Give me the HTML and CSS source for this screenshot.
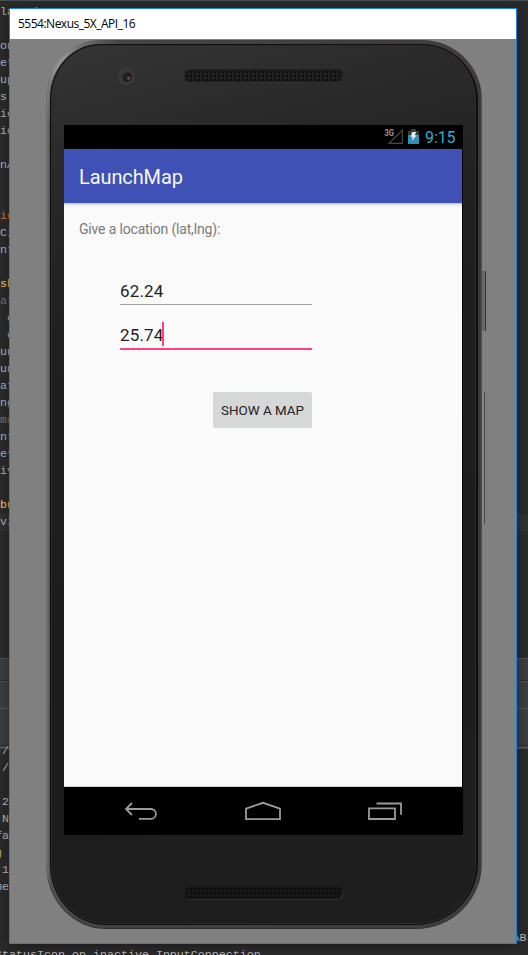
FILE: index.html
```html
<!DOCTYPE html>
<html lang="en">
<head>
<meta charset="utf-8">
<title>5554:Nexus_5X_API_16</title>
<link rel="stylesheet" href="styles.css">
</head>
<body>
<div class="desktop">
  <main class="ide">
    <pre class="editor">la   h

on
et
up
s
ie
id

nA


<span class="kw">id</span>
Ci
nt

<span class="fn">sh</span>
<span class="dim">at</span>
 e
 e
un
un
at
ng
<span class="dim">ma</span>
nt
et
iv

<span class="fn">bu</span>
<span class="current">vi</span></pre>
    <div class="tabs"></div>
    <div class="toolhead"></div>
    <div class="toolbar"></div>
    <div class="splitter"></div>
    <pre class="console">-/
./

 2
 N
fa
<span class="log">g</span>
 1
me


                                                                          AB
StatusIcon on inactive InputConnection</pre>
  </main>

  <section class="window">
    <header class="titlebar">5554:Nexus_5X_API_16</header>
    <div class="stage">
      <div class="phone">
        <i class="power"></i>
        <i class="volume"></i>
        <div class="rim">
          <div class="face">
            <div class="bezel-top">
              <span class="camera"><i class="lens"></i></span>
              <span class="speaker"></span>
            </div>
            <div class="screen">
              <div class="status">
                <svg width="20" height="18" viewBox="0 0 20 18"><path d="M18.3 2.2v13.2H5z" fill="none" stroke="#484848" stroke-width="1.2"/><text class="net" x="0.5" y="7.6" textLength="9.5" lengthAdjust="spacingAndGlyphs">3G</text></svg>
                <svg class="battery" width="11" height="16" viewBox="0 0 11 16"><path d="M3 0h5v2h3v4H0V2h3z" fill="#3c3c3c"/><path d="M0 6h11v9H0z" fill="#2f8fb8"/><path d="M4.2 3h4L6.7 6.2h2L3.8 12l.9-4.2H2.8z" fill="#eee"/></svg>
                <span class="clock">9:15</span>
              </div>
              <div class="appbar">LaunchMap</div>
              <div class="content">
                <p class="prompt">Give a location (lat,lng):</p>
                <form class="form">
                  <div class="field">62.24</div>
                  <div class="field focus">25.74<i class="caret"></i></div>
                  <div class="button">SHOW A MAP</div>
                </form>
              </div>
              <nav class="nav">
                <svg width="34" height="20" viewBox="0 0 34 20"><path d="M9 2L3 8l6 6M3 8H28a4.9 4.9 0 0 1 0 9.8H16" /></svg>
                <svg width="36" height="20" viewBox="0 0 36 20"><path d="M1 18.2V7.6L18 1.8 35 7.6v10.6z"/></svg>
                <svg width="34" height="20" viewBox="0 0 34 20"><path d="M1 7.4h26v10.6H1zM8.5 2.5H33v11.2"/></svg>
              </nav>
            </div>
            <div class="bezel-bottom"><span class="speaker low"></span></div>
          </div>
        </div>
      </div>
    </div>
  </section>
</div>
</body>
</html>
```
FILE: styles.css
```css
* { box-sizing: border-box; }
body { margin: 0; }
pre, p { margin: 0; }

.desktop {
  position: relative;
  width: 528px;
  height: 955px;
  overflow: hidden;
  background: #2b2b2b;
}

/* code editor behind the emulator */
.ide {
  display: flex;
  flex-direction: column;
  height: 955px;
  border-top: 1px solid #4b5052;
}
.ide > * { flex-shrink: 0; }
.editor, .console {
  font: 11.67px/17px "Liberation Mono", monospace;
  color: #a9b7c6;
}
.editor { height: 657px; padding-top: 3px; }
.kw { color: #cc7832; }
.fn { color: #ffc66d; }
.dim { color: #777; }
.current { display: block; background: #323232; }
.tabs { height: 23px; background: #3b3f41; border-top: 1px solid #555; border-bottom: 1px solid #282828; }
.toolhead { height: 27px; background: #3b3f41; border-top: 1px solid #515151; }
.toolbar { height: 38px; background: #3b3f41; border-top: 1px solid #555; border-bottom: 1px solid #282828; }
.splitter { height: 3px; background: #4b5052; }
.console { margin: -6px 0 0 -5px; color: #bbb; }
.log { color: #b5a866; }

/* emulator window */
.window {
  position: absolute;
  left: 9px;
  top: 8px;
  width: 508px;
  height: 936px;
  display: flex;
  flex-direction: column;
  border: 1px solid #1883d7;
  background: #808080;
  box-shadow: 0 2px 12px rgba(0, 0, 0, .4);
}
.titlebar {
  height: 30px;
  padding-left: 8px;
  background: #fff;
  color: #000;
  font: 12px/29px "Open Sans", "Noto Sans", sans-serif;
  letter-spacing: -.5px;
}
.stage { flex: 1; padding: 1px 0 0 36px; }

.phone {
  position: relative;
  width: 436px;
  height: 889px;
  padding: 4px;
  border-radius: 54px 60px 66px 60px / 58px 60px 66px 64px;
  background:
    radial-gradient(circle at 20px 28px, #a5a5a5 0, rgba(140, 140, 140, .6) 25px, transparent 60px),
    linear-gradient(90deg, #767676 0, #6a6a6a 2px, #505050 4px, #454343 50px, #403c3c 430px, #3a3737 434px, #595959 436px);
  box-shadow: inset 0 -1px 1px #303030;
}
.power, .volume { position: absolute; left: 436px; }
.power { top: 231px; width: 4px; height: 60px; border-right: 1px solid #3a3434; background: #6a6767; }
.volume { top: 352px; width: 3px; height: 132px; border-right: 1px solid #4a4848; background: #858585; }
.rim {
  height: 881px;
  padding: 1px 2px 1px 1px;
  border-radius: 50px 56px 62px 56px / 54px 56px 62px 60px;
  background: #0f0f0f;
}
.face {
  display: flex;
  flex-direction: column;
  align-items: flex-start;
  height: 879px;
  border: 1px solid #2b2b2b;
  border-radius: 49px 54px 60px 55px / 53px 54px 60px 59px;
  padding-left: 12px;
  background: linear-gradient(165deg, #353535 0, #2a2a2a 12%, #202020 28%, #1d1d1d 60%, #1e1e1f 100%);
}
.bezel-top {
  display: flex;
  align-items: center;
  width: 399px;
  height: 79px;
  padding: 0 0 19px 54px;
  gap: 49px;
}
.camera {
  display: grid;
  place-items: center;
  width: 17px;
  height: 17px;
  border-radius: 50%;
  background: #3a3a3a;
}
.lens {
  width: 11px;
  height: 11px;
  border-radius: 50%;
  background: radial-gradient(circle at 70% 65%, #85646e 0, #2c2027 2px, #17171d 4px, #2e2e30 6px);
}
.speaker {
  width: 160px;
  height: 14px;
  border-radius: 7px;
  background: radial-gradient(circle, #090909 .6px, transparent 1.3px) 1px 1px / 4px 4px, #1f1f1f;
  box-shadow: inset -1px -1px 0 #303030;
}
.bezel-bottom { padding: 51px 0 0 120px; }
.low { display: block; background-color: #171717; }

/* device screen */
.screen {
  width: 399px;
  height: 710px;
  display: flex;
  flex-direction: column;
  background: #000;
  font-family: Roboto, sans-serif;
}
.status {
  display: flex;
  align-items: center;
  height: 24px;
  padding: 0 7px 0 320px;
}
.net { font: bold 9px Roboto, sans-serif; fill: #999; }
.battery { margin-left: 4px; }
.clock { margin-left: 6px; color: #33a9d6; font-size: 16px; line-height: 24px; letter-spacing: -.1px; padding-top: 1px; }
.appbar {
  width: 398px;
  height: 54px;
  padding-left: 15px;
  background: #3f51b5;
  color: #f7f7fb;
  font-size: 20px;
  line-height: 56px;
  letter-spacing: -.1px;
}
.content {
  width: 398px;
  height: 584px;
  padding: 16px 15px 0;
  background: linear-gradient(#bcbcbc 0, #eee 2px, #fafafa 5px);
  border-bottom: 1px solid #c8cccc;
}
.prompt { color: #7b7b7b; font-size: 14px; line-height: 20px; height: 20px; letter-spacing: -.17px; }
.form {
  display: flex;
  flex-direction: column;
  width: 192px;
  margin: 36px 0 0 41px;
}
.field {
  display: flex;
  align-items: center;
  height: 30px;
  padding-top: 2px;
  border-bottom: 1px solid #a0a0a0;
  color: #222;
  font-size: 17px;
  letter-spacing: .15px;
}
.field.focus { height: 31px; margin-top: 14px; border-bottom: 2px solid #ff4081; }
.caret { width: 2px; height: 24px; margin: -2px 0 0 -1px; background: #ff4081; }
.button {
  align-self: flex-end;
  width: 99px;
  height: 36px;
  margin-top: 42px;
  border-radius: 2px;
  background: #d6d7d7;
  color: #222;
  font-size: 13.4px;
  line-height: 37px;
  text-align: center;
  white-space: nowrap;
}
.nav {
  display: flex;
  justify-content: space-between;
  align-items: center;
  height: 48px;
  padding: 0 61px 0 59px;
}
.nav svg { fill: none; stroke: #9b9b9b; stroke-width: 1.8; }
```
